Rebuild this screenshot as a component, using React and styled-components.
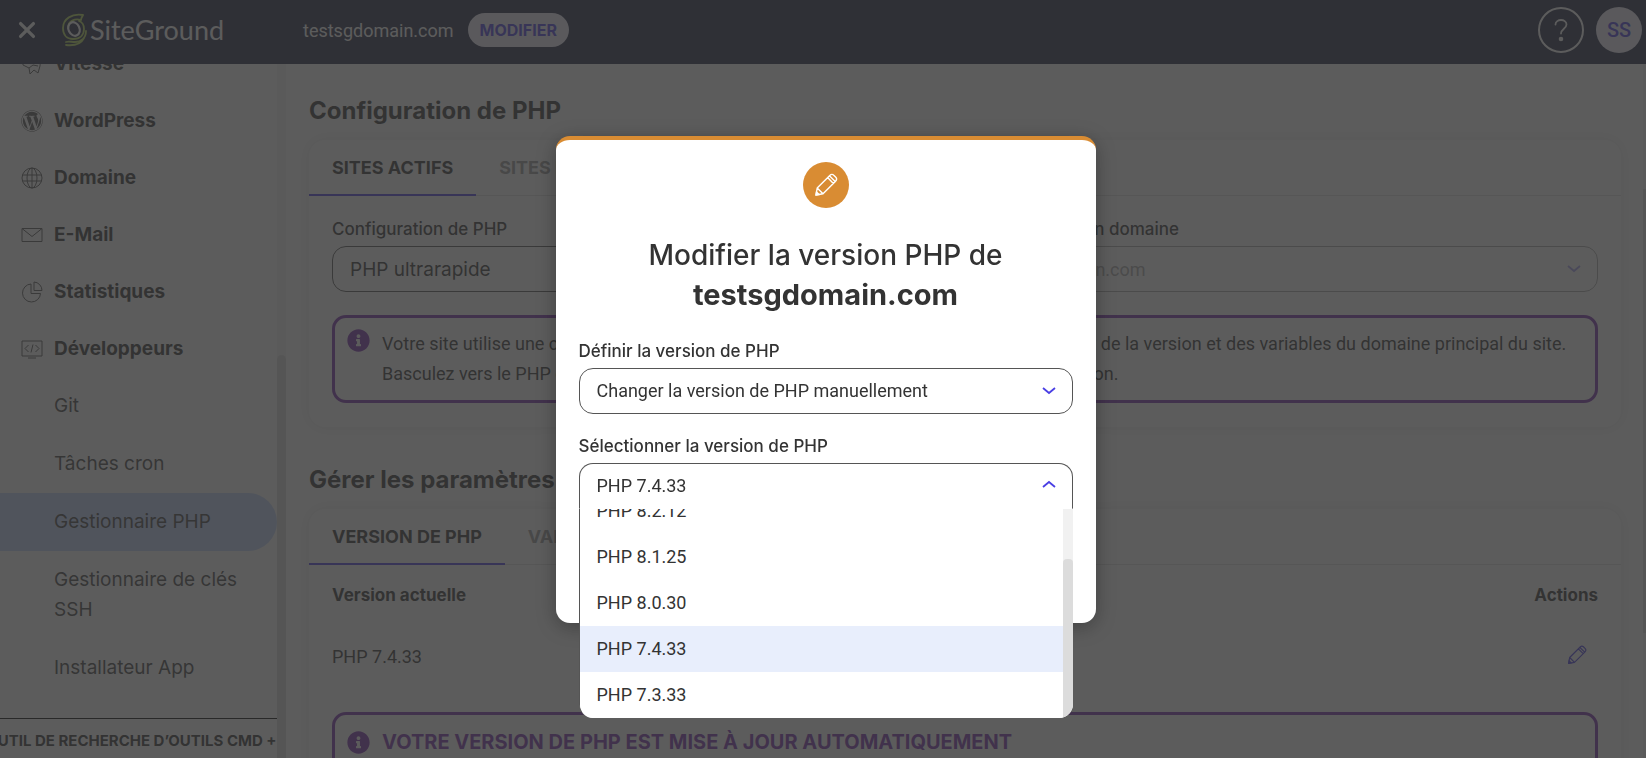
import React, {useState} from 'react';
import styled, { createGlobalStyle } from 'styled-components';
import { FaInfoCircle, FaWordpress } from 'react-icons/fa';

const GlobalStyle = createGlobalStyle`
    *{
        box-sizing:border-box;
    }

    body{
        margin:0;
        overflow:hidden;
        color:#333;
        background-color:#fff;
        font-family:Inter, sans-serif;
    }

    button, select{
        font-family:inherit;
        color:inherit;
    }

    ul{
        margin:0;
        padding:0;
        list-style:none;
    }
`;

const Page = styled.div`
    height:100vh;
    display:flex;
    flex-direction:column;
`;

const Header = styled.header`
    flex:none;
    height:64px;
    display:flex;
    align-items:center;
    padding:0 4px 4px 16px;
    background-color:#1e2341;
    color:#fff;
`;

const CloseButton = styled.button`
    display:flex;
    padding:0;
    border:none;
    background:none;
    color:#fff;
`;

const Brand = styled.a`
    width:241px;
    display:flex;
    align-items:center;
    gap:2px;
    margin-left:24px;
    color:#fff;
    font-family:Lato, sans-serif;
    font-size:27px;
    line-height:40px;
    text-decoration:none;
`;

const SiteName = styled.span`
    font-family:Roboto, sans-serif;
    font-size:18px;
`;

const EditButton = styled.button`
    height:34px;
    margin-left:14px;
    padding:0 12px;
    border:none;
    border-radius:17px;
    background-color:#f3f0ff;
    color:#4a3fe4;
    font-size:16px;
    font-weight:700;
`;

const HeaderActions = styled.div`
    display:flex;
    gap:12px;
    margin-left:auto;
`;

const RoundButton = styled.button`
    width:46px;
    height:46px;
    display:flex;
    align-items:center;
    justify-content:center;
    padding:0;
    border:${props => props.$filled ? 'none' : '2px solid #fff'};
    border-radius:50%;
    background-color:${props => props.$filled ? '#f3f0ff' : 'transparent'};
    color:${props => props.$filled ? '#4a3fe4' : '#fff'};
    font-family:Roboto, sans-serif;
    font-size:20px;
    font-weight:500;
`;

const Body = styled.div`
    flex:1;
    min-height:0;
    display:flex;
`;

const Sidebar = styled.aside`
    flex:none;
    width:286px;
    display:grid;
    grid-template-columns:1fr 9px;
    min-height:0;
`;

const SidebarColumn = styled.div`
    min-width:0;
    min-height:0;
    display:flex;
    flex-direction:column;
`;

const Menu = styled.ul`
    flex:1;
    min-height:0;
    display:flex;
    flex-direction:column;
    justify-content:flex-end;
    overflow:hidden;
    padding-bottom:21px;
`;

const MenuLink = styled.a`
    min-height:57px;
    display:flex;
    align-items:center;
    padding-left:20px;
    color:#333;
    font-size:19px;
    font-weight:700;
    line-height:30px;
    text-decoration:none;
`;

const MenuIcon = styled.span`
    width:24px;
    display:flex;
    justify-content:center;
    margin-right:10px;
    color:#555;
`;

const SubLink = styled.a`
    display:block;
    padding:14px 20px 14px 54px;
    border-radius:0 29px 29px 0;
    background-color:${props => props.$active ? '#c3d7ff' : 'transparent'};
    color:#444;
    font-size:19px;
    line-height:30px;
    text-decoration:none;
`;

const SearchButton = styled.button`
    flex:none;
    height:40px;
    display:flex;
    align-items:center;
    justify-content:center;
    overflow:hidden;
    padding:4px 0 0;
    border:none;
    border-top:1px solid #000;
    background:none;
    font-size:15px;
    font-weight:700;
    white-space:nowrap;
`;

const SidebarTrack = styled.div`
    display:flex;
    flex-direction:column;
    justify-content:flex-end;
    background-color:#f4f4f4;
`;

const SidebarThumb = styled.div`
    height:58%;
    border-radius:5px 5px 0 0;
    background-color:#ddd;
`;

const Main = styled.main`
    flex:1;
    min-width:0;
    overflow:hidden;
    padding:27px 22px 0 23px;
`;

const MainTrack = styled.div`
    width:3px;
    display:flex;
    align-items:center;
    background-color:#f4f4f4;
`;

const MainThumb = styled.div`
    width:100%;
    height:64%;
    background-color:#ddd;
`;

const SectionTitle = styled.h2`
    margin:0;
    font-size:24px;
    font-weight:700;
    line-height:40px;
`;

const Card = styled.section`
    margin:9px 0 33px;
    border-radius:16px;
    background-color:#fff;
    box-shadow:0 0 16px rgba(0, 0, 0, 0.1);
`;

const Tabs = styled.div`
    display:flex;
    border-bottom:1px solid #e0e0e0;
`;

const Tab = styled.button`
    height:56px;
    margin-bottom:-1px;
    padding:0 23px;
    border:none;
    border-bottom:2px solid ${props => props.$active ? '#4a3fe4' : 'transparent'};
    background:none;
    color:${props => props.$active ? '#333' : '#999'};
    font-size:18px;
    font-weight:700;
`;

const CardBody = styled.div`
    padding:20px 23px 24px;
`;

const FieldRow = styled.div`
    display:grid;
    grid-template-columns:1fr 1fr;
    gap:24px;
    margin-bottom:23px;
`;

const Label = styled.label`
    display:block;
    margin-bottom:4px;
    font-size:17px;
    font-weight:500;
    line-height:26px;
`;

const SelectBox = styled.div`
    position:relative;

    svg{
        position:absolute;
        top:17px;
        right:17px;
        color:#4a3fe4;
        opacity:${props => props.$disabled ? 0.5 : 1};
        pointer-events:none;
    }
`;

const Select = styled.select`
    display:block;
    width:100%;
    height:46px;
    padding:0 48px 0 17px;
    appearance:none;
    border:1px solid #555;
    border-bottom-color:${props => props.$open ? 'transparent' : '#555'};
    border-radius:${props => props.$open ? '14px 14px 0 0' : '14px'};
    background-color:#fff;
    font-family:${props => props.$wide ? 'Inter' : 'Roboto'}, sans-serif;
    font-size:${props => props.$wide ? '19px' : '18px'};
    outline:none;

    &:disabled{
        border-color:#aaa;
        color:#aaa;
        opacity:1;
    }
`;

const Notice = styled.div`
    display:flex;
    align-items:${props => props.$centered ? 'center' : 'flex-start'};
    gap:12px;
    padding:11px 12px;
    border:3px solid #7b2fb0;
    border-radius:14px;
    font-family:Roboto, sans-serif;
    font-size:18px;
    line-height:30px;

    svg{
        flex:none;
        color:#7b2fb0;
    }

    p{
        margin:0;
    }
`;

const NoticeTitle = styled.h3`
    margin:0;
    color:#7b2fb0;
    font-family:Inter, sans-serif;
    font-size:20px;
    font-weight:700;
    line-height:32px;
`;

const Table = styled.table`
    width:100%;
    margin-bottom:5px;
    border-collapse:collapse;

    th{
        padding:0;
        font-size:17px;
        font-weight:700;
        line-height:20px;
        text-align:left;
    }

    td{
        height:102px;
        padding:0;
        font-family:Roboto, sans-serif;
        font-size:18px;
    }

    th:last-child, td:last-child{
        text-align:right;
    }
`;

const IconButton = styled.button`
    padding:0 11px;
    border:none;
    background:none;
    color:#4a3fe4;
    vertical-align:middle;
`;

const Overlay = styled.div`
    position:fixed;
    inset:0;
    display:flex;
    align-items:center;
    justify-content:center;
    padding-left:5px;
    background-color:rgba(51, 51, 51, 0.8);
`;

const Modal = styled.div`
    width:540px;
    padding:22px 23px 114px;
    border-top:4px solid #d98c33;
    border-radius:14px;
    background-color:#fff;
    box-shadow:0 4px 20px rgba(0, 0, 0, 0.3);
`;

const ModalIcon = styled.div`
    width:46px;
    height:46px;
    display:flex;
    align-items:center;
    justify-content:center;
    margin:0 auto 28px;
    border-radius:50%;
    background-color:#d98c33;
    color:#fff;
`;

const ModalTitle = styled.h1`
    margin:0 0 24px;
    font-size:28px;
    font-weight:500;
    line-height:39px;
    text-align:center;

    strong{
        display:block;
        font-size:29px;
        font-weight:700;
    }
`;

const Field = styled.div`
    & + &{
        margin-top:19px;
    }
`;

const Options = styled.div`
    position:absolute;
    top:46px;
    left:0;
    right:0;
    height:209px;
    display:grid;
    grid-template-columns:1fr 10px;
    overflow:hidden;
    border-left:1px solid #555;
    border-radius:0 0 14px 14px;
    background-color:#fff;
`;

const OptionList = styled.ul`
    min-height:0;
    display:flex;
    flex-direction:column;
    justify-content:flex-end;
    overflow:hidden;
`;

const Option = styled.li`
    flex:none;
    padding:0 17px;
    background-color:${props => props.$selected ? '#e8eefc' : '#fff'};
    font-family:Roboto, sans-serif;
    font-size:18px;
    line-height:46px;
`;

const OptionTrack = styled.div`
    display:flex;
    align-items:flex-end;
    background-color:#f1f1f1;
`;

const OptionThumb = styled.div`
    width:100%;
    height:76%;
    border-radius:4px 4px 0 0;
    background-color:#dcdcdc;
`;

const Stroke = ({size = 24, width = 1, children}) => (
    <svg width={size} height={size} viewBox="0 0 24 24" fill="none" stroke="currentColor" strokeWidth={width} aria-hidden="true">
        {children}
    </svg>
)

const Pencil = ({size}) => (
    <Stroke size={size} width={1.4}>
        <path strokeLinejoin="round" d="M2 22l1.2-7L15.8 2.4a3 3 0 0 1 4.2 0l1.6 1.6a3 3 0 0 1 0 4.2L9 20.8zM3.2 15L9 20.8M13.6 4.6l5.8 5.8M15.4 2.8l5.8 5.8" />
        <path fill="currentColor" d="M2 22l.5-3 2.5 2.5z" />
    </Stroke>
)

const Chevron = ({up}) => (
    <svg width="14" height="12" viewBox="0 0 14 12" fill="none" stroke="currentColor" strokeWidth="1.8" aria-hidden="true">
        <path d={up ? 'M1 7l6-5 6 5' : 'M1 3l6 5 6-5'} />
    </svg>
)

const LogoMark = () => (
    <svg width="26" height="34" viewBox="0 0 26 34" fill="none" strokeLinecap="round" strokeLinejoin="round" aria-hidden="true">
        <path stroke="#b8dc5a" strokeWidth="1.8" d="M21 2C10 0 1 6 1 15c0 7 4 11 10 11 7 0 11-4 11-10 0-4-2-7-5-8M21 2c-1 2-2 3-2 5-6-2-13 1-13 8M24 18c0 7-5 11-11 11-4 0-6-1-9 0M22 25c-3 6-9 8-18 7" />
        <ellipse cx="12" cy="16" rx="5.5" ry="7" transform="rotate(-25 12 16)" stroke="#fff" strokeWidth="2.2" />
    </svg>
)

const menu = [
    {
        label: 'Vitesse',
        icon: <Stroke><path d="M3 13c-1-6 5-10 10-9s8 5 7 10l-2 7-4-3-4 4-1-6zM9 16l4-3 5 1" /></Stroke>
    },
    {label: 'WordPress', icon: <FaWordpress size={22} />},
    {
        label: 'Domaine',
        icon: <Stroke><circle cx="12" cy="12" r="10" /><ellipse cx="12" cy="12" rx="5" ry="10" /><path d="M12 2v20M2.5 9h19M2.5 15h19" /></Stroke>
    },
    {
        label: 'E-Mail',
        icon: <Stroke><path d="M2 5.5h20v13H2zM2 5.5l10 8 10-8" /></Stroke>
    },
    {
        label: 'Statistiques',
        icon: <Stroke><path d="M11 4a9 9 0 1 0 9.5 9.5H11zM14 2v8.5h8A8.5 8.5 0 0 0 14 2z" /></Stroke>
    },
    {
        label: 'Développeurs',
        icon: <Stroke><path d="M2 4h20v15H2zM8 21h8M8.5 8L5 11.5 8.5 15M15.5 8l3.5 3.5-3.5 3.5M13 7.5l-2 8" /></Stroke>
    }
]

const subMenu = ['Git', 'Tâches cron', 'Gestionnaire PHP', 'Gestionnaire de clés SSH', 'Installateur App']

const versions = ['PHP 8.2.12', 'PHP 8.1.25', 'PHP 8.0.30', 'PHP 7.4.33', 'PHP 7.3.33']

function App() {

    const [version, setVersion] = useState('PHP 7.4.33');

    return (
        <>
            <GlobalStyle />
            <Page>
                <Header>
                    <CloseButton aria-label="Fermer">
                        <Stroke size={22} width={3.6}><path strokeLinecap="round" d="M5 5l14 14M19 5L5 19" /></Stroke>
                    </CloseButton>
                    <Brand href="#"><LogoMark />SiteGround</Brand>
                    <SiteName>testsgdomain.com</SiteName>
                    <EditButton>MODIFIER</EditButton>
                    <HeaderActions>
                        <RoundButton aria-label="Aide">
                            <Stroke size={24} width={1.8}>
                                <path strokeLinecap="round" d="M6.5 6.5c0-6 11-6 11 0 0 4-5.5 4.5-5.5 9" />
                                <circle cx="12" cy="21" r="1.4" fill="currentColor" />
                            </Stroke>
                        </RoundButton>
                        <RoundButton $filled>SS</RoundButton>
                    </HeaderActions>
                </Header>
                <Body>
                    <Sidebar>
                        <SidebarColumn>
                            <Menu>
                                {menu.map(item => (
                                    <li key={item.label}>
                                        <MenuLink href="#"><MenuIcon>{item.icon}</MenuIcon>{item.label}</MenuLink>
                                    </li>
                                ))}
                                {subMenu.map(item => (
                                    <li key={item}>
                                        <SubLink href="#" $active={item === 'Gestionnaire PHP'}>{item}</SubLink>
                                    </li>
                                ))}
                            </Menu>
                            <SearchButton>OUTIL DE RECHERCHE D’OUTILS CMD + K</SearchButton>
                        </SidebarColumn>
                        <SidebarTrack><SidebarThumb /></SidebarTrack>
                    </Sidebar>
                    <Main>
                        <SectionTitle>Configuration de PHP</SectionTitle>
                        <Card>
                            <Tabs>
                                <Tab $active>SITES ACTIFS</Tab>
                                <Tab>SITES DÉSACTIVÉS</Tab>
                            </Tabs>
                            <CardBody>
                                <FieldRow>
                                    <div>
                                        <Label htmlFor="config">Configuration de PHP</Label>
                                        <SelectBox>
                                            <Select id="config" $wide><option>PHP ultrarapide</option></Select>
                                            <Chevron />
                                        </SelectBox>
                                    </div>
                                    <div>
                                        <Label htmlFor="domain">Sélectionner un domaine</Label>
                                        <SelectBox $disabled>
                                            <Select id="domain" disabled><option>testsgdomain.com</option></Select>
                                            <Chevron />
                                        </SelectBox>
                                    </div>
                                </FieldRow>
                                <Notice>
                                    <FaInfoCircle size={23} />
                                    <p>
                                        Votre site utilise une configuration PHP ultrarapide. Les sous-domaines de ce site héritent de la version et des variables du domaine principal du site.<br/>
                                        Basculez vers le PHP classique afin de choisir chaque sous-domaine avec sa propre version.
                                    </p>
                                </Notice>
                            </CardBody>
                        </Card>
                        <SectionTitle>Gérer les paramètres PHP</SectionTitle>
                        <Card>
                            <Tabs>
                                <Tab $active>VERSION DE PHP</Tab>
                                <Tab>VARIABLES PHP</Tab>
                            </Tabs>
                            <CardBody>
                                <Table>
                                    <thead>
                                        <tr><th>Version actuelle</th><th>Actions</th></tr>
                                    </thead>
                                    <tbody>
                                        <tr>
                                            <td>PHP 7.4.33</td>
                                            <td><IconButton aria-label="Modifier la version"><Pencil size={20} /></IconButton></td>
                                        </tr>
                                    </tbody>
                                </Table>
                                <Notice $centered>
                                    <FaInfoCircle size={23} />
                                    <NoticeTitle>VOTRE VERSION DE PHP EST MISE À JOUR AUTOMATIQUEMENT</NoticeTitle>
                                </Notice>
                            </CardBody>
                        </Card>
                    </Main>
                    <MainTrack><MainThumb /></MainTrack>
                </Body>
            </Page>

            <Overlay>
                <Modal role="dialog" aria-labelledby="modal-title">
                    <ModalIcon><Pencil size={24} /></ModalIcon>
                    <ModalTitle id="modal-title">Modifier la version PHP de <strong>testsgdomain.com</strong></ModalTitle>
                    <Field>
                        <Label htmlFor="mode">Définir la version de PHP</Label>
                        <SelectBox>
                            <Select id="mode"><option>Changer la version de PHP manuellement</option></Select>
                            <Chevron />
                        </SelectBox>
                    </Field>
                    <Field>
                        <Label htmlFor="version">Sélectionner la version de PHP</Label>
                        <SelectBox>
                            <Select id="version" $open value={version} onChange={e => setVersion(e.target.value)}>
                                {versions.map(item => <option key={item}>{item}</option>)}
                            </Select>
                            <Chevron up />
                            <Options>
                                <OptionList role="listbox">
                                    {versions.map(item => (
                                        <Option
                                            key={item}
                                            role="option"
                                            aria-selected={item === version}
                                            $selected={item === version}
                                            onClick={() => setVersion(item)}
                                        >
                                            {item}
                                        </Option>
                                    ))}
                                </OptionList>
                                <OptionTrack><OptionThumb /></OptionTrack>
                            </Options>
                        </SelectBox>
                    </Field>
                </Modal>
            </Overlay>
        </>
    )
}

export default App
